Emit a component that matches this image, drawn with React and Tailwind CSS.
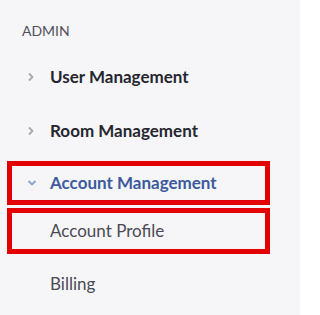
import React from 'react';

const ChevronRight = () => (
  <svg width="8" height="10" viewBox="0 0 8 10" className="shrink-0">
    <path d="M2 1.5 L5.5 5 L2 8.5" fill="none" stroke="#a8a8b0" strokeWidth="1.8" />
  </svg>
);

const ChevronDown = () => (
  <svg width="10" height="8" viewBox="0 0 10 8" className="shrink-0">
    <path d="M1.5 2 L5 5.5 L8.5 2" fill="none" stroke="#8aa3cf" strokeWidth="1.8" />
  </svg>
);

const NavRow = ({ label }) => (
  <div className="h-[54px] flex items-center pl-[27px] gap-[15px]">
    <ChevronRight />
    <span className="text-[17px] font-bold text-[#26262f]">{label}</span>
  </div>
);

export default function App() {
  return (
    <div
      className="w-[300px] h-[315px] bg-[#f6f6f9] overflow-hidden pt-[21px]"
      style={{ fontFamily: 'Lato, "Open Sans", sans-serif' }}
    >
      <div className="pl-[22px] h-[29px] leading-[20px] text-[14px] text-[#505058]">ADMIN</div>

      <NavRow label="User Management" />
      <NavRow label="Room Management" />

      <div className="flex flex-col gap-[3px] mt-[3px]">
        {/* expanded section, outlined */}
        <div className="ml-[7px] w-[263px] h-[44px] border-[5px] border-[#e30000] flex items-center pl-[15px] gap-[13px]">
          <ChevronDown />
          <span className="text-[17px] font-bold text-[#3c5a9c]">Account Management</span>
        </div>
        <div className="ml-[7px] w-[263px] h-[46px] border-[5px] border-[#e30000] flex items-center pl-[38px]">
          <span className="text-[17px] text-[#4a4a53]">Account Profile</span>
        </div>
      </div>

      <div className="h-[60px] flex items-center pl-[50px]">
        <span className="text-[17px] text-[#4a4a53]">Billing</span>
      </div>
    </div>
  );
}
